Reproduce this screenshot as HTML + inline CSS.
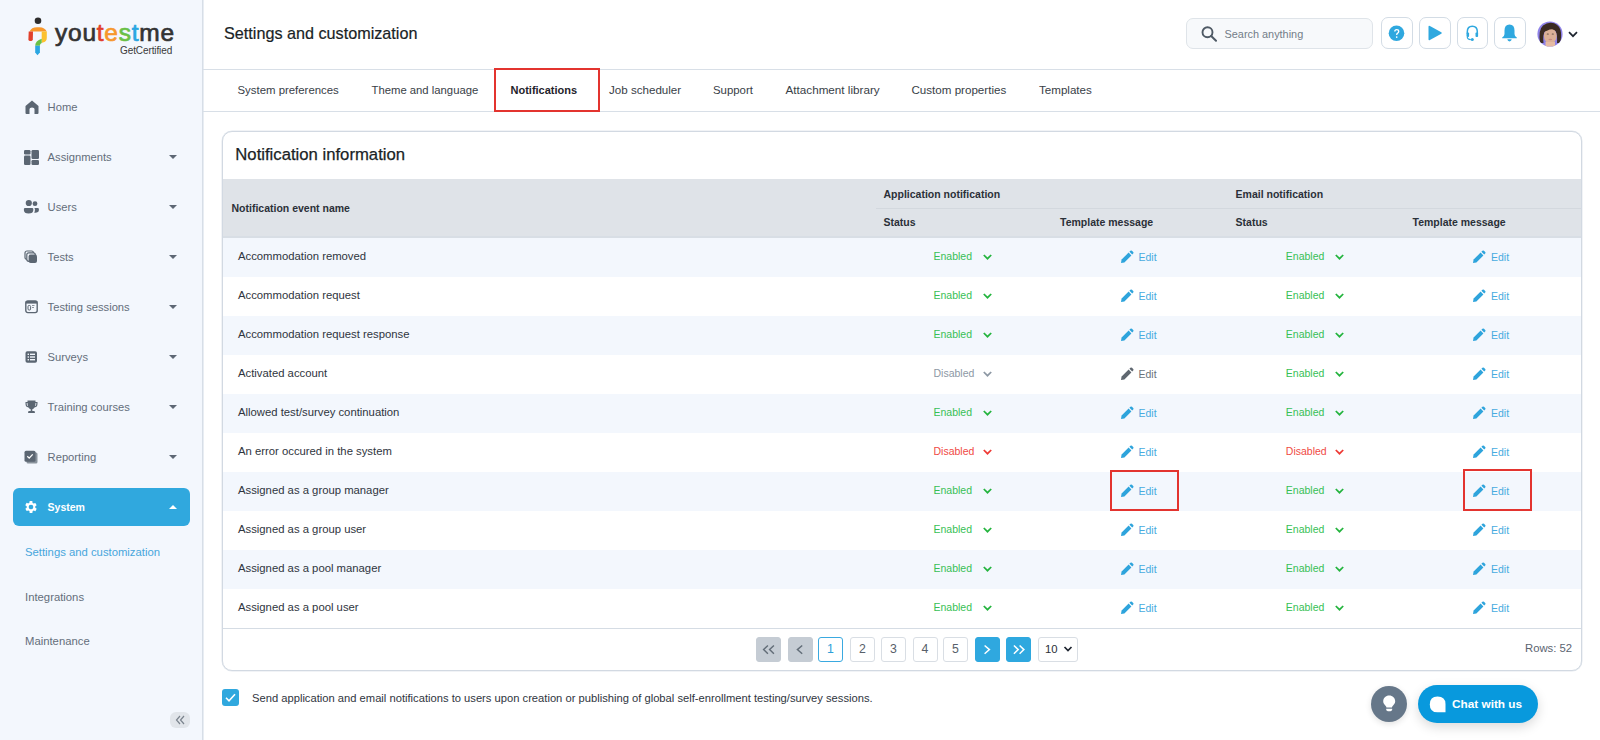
<!DOCTYPE html>
<html><head><meta charset="utf-8">
<style>
*{box-sizing:border-box;margin:0;padding:0}
html,body{width:1600px;height:740px;overflow:hidden;background:#fff;font-family:"Liberation Sans",sans-serif;color:#2b3038}
.abs{position:absolute;white-space:nowrap}
#side{position:absolute;left:0;top:0;width:203px;height:740px;background:#f3f7fd;border-right:1px solid #d7dee7;box-shadow:1px 0 0 #e8edf3}
.nav{position:absolute;left:47.6px;font-size:11.2px;line-height:14px;color:#636e7b}
.nico{position:absolute}
.caret{position:absolute;left:169px;width:0;height:0;border-left:4px solid transparent;border-right:4px solid transparent;border-top:4.5px solid #5d6774}
#hdr{position:absolute;left:203px;top:0;width:1397px;height:70px;border-bottom:1px solid #d8dfe7}
#tabs{position:absolute;left:203px;top:70px;width:1397px;height:42px;border-bottom:1px solid #d8dfe7}
.tab{position:absolute;top:83px;font-size:11.4px;line-height:14px;color:#383e47}
.redbox{position:absolute;border:2.5px solid #e3342f}
#card{position:absolute;left:222px;top:131px;width:1360px;height:540px;border:1px solid #d2d9e2;box-shadow:0 0 0 0.5px #e3e8ee;border-radius:10px;overflow:hidden;background:#fff}
.th{position:absolute;font-size:10.5px;font-weight:bold;line-height:14px;color:#2b3038}
.row{position:absolute;left:0;width:1358px;height:39px}
.row.odd{background:#f3f7fd}
.cell{position:absolute;top:0;height:39px;line-height:36px;font-size:11.3px;color:#2f3540}
.st{position:absolute;top:0;height:39px;line-height:36px;font-size:10.5px}
.ed{position:absolute;top:0;height:39px;line-height:38px;font-size:10.5px;color:#47abe0}
.pg{position:absolute;top:637px;width:25px;height:25px;border:1px solid #d9dee4;border-radius:3px;background:#fff;font-size:12.3px;line-height:23.3px;text-align:center;color:#58606a}
.ibtn{position:absolute;top:17px;width:31.5px;height:32px;border:1px solid #d3dce5;border-radius:7px;background:#fff}
</style></head><body>

<div id="side">
  <!-- logo -->
  <svg class="abs" style="left:24px;top:12px" width="28" height="46" viewBox="0 0 28 46">
    <circle cx="14" cy="8.7" r="3.3" fill="#2d2d2d"/>
    <path d="M5.6 19.6 C6.6 16.6 9.4 15.2 13 15.2 L15.5 15.2 C19 15.2 21.6 16.8 22.7 19.6 Z" fill="#f7972b"/>
    <path d="M4.7 19.4 L9 19.4 L8.8 27.6 Q8.7 28.9 7.3 28.9 L5.8 28.9 Q4.4 28.9 4.4 27.6 Z" fill="#e1402b"/>
    <path d="M17.7 19.4 L22.8 19.4 L22.8 26 Q22.8 29.6 18.8 30.6 L17.7 30.9 Z" fill="#fcc12f"/>
    <path d="M17.7 26.7 L17.7 30.9 Q15.9 31.6 15.9 33.8 L11.2 33.8 Q11.2 28.6 17.7 26.7 Z" fill="#69c045"/>
    <path d="M11.2 33.7 L15.9 33.7 L15.9 40.6 L13.5 43.2 L11.2 40.6 Z" fill="#2aa6e2"/>
  </svg>
  <div class="abs" style="left:55px;top:17.8px;font-size:24.5px;line-height:30px;letter-spacing:0.75px;-webkit-text-stroke:0.7px #333;color:#333">you<span style="color:#e1402b;-webkit-text-stroke-color:#e1402b">t</span><span style="color:#f7972b;-webkit-text-stroke-color:#f7972b">e</span><span style="color:#69c045;-webkit-text-stroke-color:#69c045">s</span><span style="color:#2aa6e2;-webkit-text-stroke-color:#2aa6e2">t</span>me</div>
  <div class="abs" style="left:120px;top:45px;font-size:10px;line-height:12px;color:#3a3a3a;letter-spacing:-0.1px">GetCertified</div>

  <!-- nav -->
  <svg class="nico" style="left:25px;top:100px" width="14" height="14" viewBox="0 0 14 14"><path d="M7 0.5 L13.5 6 L13.5 13 Q13.5 14 12.5 14 L9.5 14 L9.5 9 Q9.5 7.5 7 7.5 Q4.5 7.5 4.5 9 L4.5 14 L1.5 14 Q0.5 14 0.5 13 L0.5 6 Z" fill="#5b6672"/></svg>
  <div class="nav" style="top:100px">Home</div>

  <svg class="nico" style="left:24px;top:150px" width="15" height="15" viewBox="0 0 15 15"><rect x="0" y="0" width="6.5" height="4.5" rx="1.2" fill="#5b6672"/><rect x="0" y="5.5" width="6.5" height="9.5" rx="1.2" fill="#5b6672"/><rect x="7.5" y="0" width="7.5" height="9" rx="1.2" fill="#5b6672"/><rect x="7.5" y="10" width="7.5" height="5" rx="1.2" fill="#5b6672"/></svg>
  <div class="nav" style="top:150px">Assignments</div>
  <div class="caret" style="top:155px"></div>

  <svg class="nico" style="left:23px;top:199px" width="17" height="16" viewBox="0 0 17 16"><circle cx="5.8" cy="4" r="3.1" fill="#5b6672"/><circle cx="12" cy="4.7" r="2.4" fill="#5b6672"/><path d="M0.9 10 Q0.9 9 2 9 L9.2 9 Q10.3 9 10.3 10 L10.3 11 Q10.3 14.6 5.6 14.6 Q0.9 14.6 0.9 11 Z" fill="#5b6672"/><path d="M11.2 9 L14.8 9 Q15.9 9 15.9 10 L15.9 11 Q15.9 13.8 12.2 13.8 L11.2 13.8 Q11.9 12.6 11.9 11 L11.9 10 Q11.9 9.4 11.2 9 Z" fill="#5b6672"/></svg>
  <div class="nav" style="top:200px">Users</div>
  <div class="caret" style="top:205px"></div>

  <svg class="nico" style="left:24px;top:250px" width="14" height="14" viewBox="0 0 14 14"><rect x="1" y="1" width="8.5" height="8.5" rx="2" fill="none" stroke="#5b6672" stroke-width="1.2"/><rect x="2.8" y="2.8" width="8.5" height="8.5" rx="2" fill="#f3f7fd" stroke="#5b6672" stroke-width="1.2"/><rect x="4.6" y="4.6" width="8.4" height="8.4" rx="2" fill="#5b6672"/></svg>
  <div class="nav" style="top:250px">Tests</div>
  <div class="caret" style="top:255px"></div>

  <svg class="nico" style="left:25px;top:300px" width="13" height="14" viewBox="0 0 13 14"><rect x="0.8" y="1" width="11.4" height="11.6" rx="2" fill="none" stroke="#5b6672" stroke-width="1.4"/><rect x="0.8" y="1" width="11.4" height="2.6" fill="#5b6672"/><rect x="3" y="5.5" width="2.6" height="4.5" rx="1" fill="none" stroke="#5b6672" stroke-width="1"/><rect x="7" y="5" width="2.5" height="1" fill="#8a939c"/><rect x="7" y="7" width="2" height="1" fill="#8a939c"/></svg>
  <div class="nav" style="top:300px">Testing sessions</div>
  <div class="caret" style="top:305px"></div>

  <svg class="nico" style="left:25px;top:351px" width="13" height="12" viewBox="0 0 13 12"><rect x="0.5" y="0.3" width="11.5" height="11.5" rx="1.8" fill="#5b6672"/><rect x="2.6" y="2.6" width="1.4" height="1.4" fill="#f3f7fd"/><rect x="2.6" y="5.3" width="1.4" height="1.4" fill="#f3f7fd"/><rect x="2.6" y="8" width="1.4" height="1.4" fill="#f3f7fd"/><rect x="5" y="2.6" width="5" height="1.4" fill="#f3f7fd"/><rect x="5" y="5.3" width="5" height="1.4" fill="#f3f7fd"/><rect x="5" y="8" width="5" height="1.4" fill="#f3f7fd"/></svg>
  <div class="nav" style="top:350px">Surveys</div>
  <div class="caret" style="top:355px"></div>

  <svg class="nico" style="left:25px;top:400px" width="13" height="14" viewBox="0 0 13 14"><path d="M2.5 0.5 L10.5 0.5 L10.5 2 L12.5 2 L12.5 4 Q12.5 7 9.5 7.5 Q8.5 9 7.3 9.3 L7.3 11 L9.5 11 L10 13 L3 13 L3.5 11 L5.7 11 L5.7 9.3 Q4.5 9 3.5 7.5 Q0.5 7 0.5 4 L0.5 2 L2.5 2 Z M1.7 3 L1.7 4 Q1.7 6 3 6.3 Q2.5 5 2.5 3 Z M11.3 3 L10.5 3 Q10.5 5 10 6.3 Q11.3 6 11.3 4 Z" fill="#5b6672"/></svg>
  <div class="nav" style="top:400px">Training courses</div>
  <div class="caret" style="top:405px"></div>

  <svg class="nico" style="left:24px;top:450px" width="14" height="14" viewBox="0 0 14 14"><rect x="2.5" y="2.5" width="11" height="11" rx="1.5" fill="#8a939c"/><rect x="0.5" y="0.8" width="11" height="11" rx="1.5" fill="#5b6672"/><path d="M3.3 6.3 L5.2 8.1 L8.7 4.4" stroke="#fff" stroke-width="1.3" fill="none"/></svg>
  <div class="nav" style="top:450px">Reporting</div>
  <div class="caret" style="top:455px"></div>

  <div class="abs" style="left:12.5px;top:488px;width:177.5px;height:37.5px;background:#30a8de;border-radius:6px"></div>
  <svg class="nico" style="left:23.4px;top:499px" width="16" height="16" viewBox="0 0 24 24"><path fill="#fff" d="M19.4 13a7.5 7.5 0 0 0 0-2l2.1-1.6-2-3.5-2.5 1a7.4 7.4 0 0 0-1.7-1L15 3h-4l-.4 2.8a7.4 7.4 0 0 0-1.7 1l-2.5-1-2 3.5L6.6 11a7.5 7.5 0 0 0 0 2l-2.1 1.6 2 3.5 2.5-1a7.4 7.4 0 0 0 1.7 1L11 21h4l.4-2.8a7.4 7.4 0 0 0 1.7-1l2.5 1 2-3.5zM13 15.5a3.5 3.5 0 1 1 0-7 3.5 3.5 0 0 1 0 7z" transform="translate(-1 0)"/></svg>
  <div class="nav" style="top:500px;color:#fff;font-weight:bold;font-size:10.5px">System</div>
  <div class="caret" style="top:504.5px;border-top:0;border-bottom:4.5px solid #fff"></div>

  <div class="nav" style="left:25px;top:545px;color:#47a6dc;font-size:11.3px">Settings and customization</div>
  <div class="nav" style="left:25px;top:590px;font-size:11.3px">Integrations</div>
  <div class="nav" style="left:25px;top:634px;font-size:11.3px">Maintenance</div>

  <div class="abs" style="left:170px;top:712px;width:20px;height:16px;border-radius:6px;background:#e1e5ea"></div>
  <svg class="abs" style="left:174px;top:714px" width="12" height="12" viewBox="0 0 12 12"><path d="M6 2 L2.5 6 L6 10 M10 2 L6.5 6 L10 10" stroke="#7a838d" stroke-width="1.2" fill="none"/></svg>
</div>

<div id="hdr"></div>
<div class="abs" style="left:224px;top:24px;font-size:16.2px;line-height:18px;color:#1a1f26;-webkit-text-stroke:0.2px #1a1f26">Settings and customization</div>

<!-- search -->
<div class="abs" style="left:1186px;top:17.5px;width:187px;height:31px;border:1px solid #dfe4e9;border-radius:7px;background:#f7f9fb"></div>
<svg class="abs" style="left:1201px;top:26px" width="17" height="16" viewBox="0 0 17 16"><circle cx="6.5" cy="6.3" r="5" stroke="#4f5a65" stroke-width="1.9" fill="none"/><path d="M10.2 10 L15 14.8" stroke="#4f5a65" stroke-width="2" stroke-linecap="round"/></svg>
<div class="abs" style="left:1224.5px;top:27px;font-size:10.9px;line-height:14px;color:#737d88">Search anything</div>

<div class="ibtn" style="left:1381px"></div>
<div class="ibtn" style="left:1419px"></div>
<div class="ibtn" style="left:1456.5px"></div>
<div class="ibtn" style="left:1494px"></div>
<svg class="abs" style="left:1388px;top:25px" width="17" height="17" viewBox="0 0 17 17"><circle cx="8.5" cy="8.3" r="7.8" fill="#2fa8df"/><path d="M6.8 6.5 Q6.8 4.6 8.7 4.6 Q10.7 4.6 10.7 6.4 Q10.7 7.5 9.6 8.1 Q8.7 8.6 8.7 9.9" stroke="#fff" stroke-width="1.35" fill="none"/><circle cx="8.7" cy="12.1" r="0.85" fill="#fff"/></svg>
<svg class="abs" style="left:1426px;top:25px" width="17" height="17" viewBox="0 0 17 17"><path d="M2.5 1.8 Q2.5 0.3 3.9 1 L15.3 7.3 Q16.3 8 15.3 8.7 L3.9 15 Q2.5 15.7 2.5 14.2 Z" fill="#2fa8df"/></svg>
<svg class="abs" style="left:1464px;top:25px" width="17" height="17" viewBox="0 0 17 17"><path d="M3.3 8.5 L3.3 6.8 Q3.3 1.3 8.3 1.3 Q13.3 1.3 13.3 6.8 L13.3 8.5" stroke="#2fa8df" stroke-width="1.5" fill="none"/><rect x="2.5" y="7.5" width="2.6" height="4.5" rx="0.9" fill="#2fa8df"/><rect x="11.5" y="7.5" width="2.6" height="4.5" rx="0.9" fill="#2fa8df"/><path d="M3.3 12 Q3.3 14.5 6.8 14.6" stroke="#2fa8df" stroke-width="1.2" fill="none"/><circle cx="8.3" cy="14.6" r="1.5" fill="#2fa8df"/></svg>
<svg class="abs" style="left:1501px;top:24px" width="17" height="19" viewBox="0 0 17 19"><path d="M8.5 0.5 Q13.5 0.5 13.5 6.5 L13.5 10 Q13.5 12 15.8 13.5 L15.8 14.2 L1.2 14.2 L1.2 13.5 Q3.5 12 3.5 10 L3.5 6.5 Q3.5 0.5 8.5 0.5 Z" fill="#2fa8df"/><path d="M6.3 15.3 Q6.6 17.4 8.5 17.4 Q10.4 17.4 10.7 15.3 Z" fill="#2fa8df"/></svg>

<!-- avatar -->
<svg class="abs" style="left:1537px;top:20.5px" width="26" height="26" viewBox="0 0 26 26">
  <defs><clipPath id="av"><circle cx="13" cy="13" r="12.6"/></clipPath></defs>
  <g clip-path="url(#av)">
    <rect width="26" height="26" fill="#8e82e8"/>
    <path d="M3 22 Q1 9 6 4.5 Q10 1.5 14 1.8 Q21 2 23.5 9 Q25 15 23 22 L20 22 Q20.5 14 18.5 10 L8 10 Q5.5 14 6.5 22 Z" fill="#3b2b22"/>
    <ellipse cx="13.3" cy="14.8" rx="6.4" ry="7.6" fill="#dcb097"/>
    <path d="M6.5 11 Q8 6 13 5.8 Q18.5 5.8 20 11 Q18 8.5 15 8.2 Q12.5 8.3 10.5 9.5 Q8.5 10.2 6.5 11 Z" fill="#3b2b22"/>
    <rect x="8.5" y="21" width="9.5" height="6" fill="#e6bba3"/>
    <ellipse cx="13.3" cy="18.4" rx="1.9" ry="0.75" fill="#c98a80"/>
    <ellipse cx="10.8" cy="13" rx="1.1" ry="0.55" fill="#5a4a45"/>
    <ellipse cx="15.8" cy="13" rx="1.1" ry="0.55" fill="#5a4a45"/>
  </g>
</svg>
<svg class="abs" style="left:1568px;top:31px" width="10" height="7" viewBox="0 0 10 7"><path d="M1 1.2 L5 5.2 L9 1.2" stroke="#1e2530" stroke-width="1.7" fill="none"/></svg>

<!-- tabs -->
<div id="tabs"></div>
<div class="tab" style="left:237.5px">System preferences</div>
<div class="tab" style="left:371.5px;font-size:11.3px">Theme and language</div>
<div class="tab" style="left:510.5px;font-weight:bold;font-size:11px;color:#1f242b">Notifications</div>
<div class="tab" style="left:609px;font-size:11.6px">Job scheduler</div>
<div class="tab" style="left:713px">Support</div>
<div class="tab" style="left:785.5px;font-size:11.7px">Attachment library</div>
<div class="tab" style="left:911.5px;font-size:11.6px">Custom properties</div>
<div class="tab" style="left:1039px;font-size:11.6px">Templates</div>
<div class="redbox" style="left:493.5px;top:68.3px;width:106px;height:43.6px"></div>


<!-- card -->
<div id="card">
  <div class="abs" style="left:12.3px;top:13px;font-size:16.7px;line-height:19px;color:#1a1f26;-webkit-text-stroke:0.25px #1a1f26">Notification information</div>
  <div class="abs" style="left:0;top:47px;width:1358px;height:59px;background:#dfe3e8;border-bottom:2px solid #d8dee5"></div>
  <div class="abs" style="left:653px;top:76px;width:705px;height:1px;background:#d3d8de"></div>
  <div class="th" style="left:8.5px;top:69px">Notification event name</div>
  <div class="th" style="left:660.5px;top:55px">Application notification</div>
  <div class="th" style="left:1012.6px;top:55px">Email notification</div>
  <div class="th" style="left:660.5px;top:83px">Status</div>
  <div class="th" style="left:837px;top:83px">Template message</div>
  <div class="th" style="left:1012.6px;top:83px">Status</div>
  <div class="th" style="left:1189.5px;top:83px">Template message</div>
  <!--ROWS--><div class="row odd" style="top:106px"><div class="cell" style="left:15px">Accommodation removed</div><div class="st" style="left:710.5px;color:#37bf55">Enabled</div><svg class="abs" style="left:758.9px;top:15.3px" width="11" height="8" viewBox="0 0 11 8"><path d="M1.8 2 L5.5 5.7 L9.2 2" stroke="#24b43e" stroke-width="1.75" fill="none"/></svg><div class="st" style="left:1062.8px;color:#37bf55">Enabled</div><svg class="abs" style="left:1111.2px;top:15.3px" width="11" height="8" viewBox="0 0 11 8"><path d="M1.8 2 L5.5 5.7 L9.2 2" stroke="#24b43e" stroke-width="1.75" fill="none"/></svg><svg class="abs" style="left:896.8px;top:12px" width="14" height="14" viewBox="0 0 14 14"><path d="M1 13 L1.6 9.6 L8.6 2.6 L11.4 5.4 L4.4 12.4 Z" fill="#2ea4dc"/><path d="M9.4 1.8 L10.4 0.8 Q11.2 0 12 0.8 L13.2 2 Q14 2.8 13.2 3.6 L12.2 4.6 Z" fill="#2ea4dc"/></svg><div class="ed" style="left:915.5px;color:#47abe0">Edit</div><svg class="abs" style="left:1249.3px;top:12px" width="14" height="14" viewBox="0 0 14 14"><path d="M1 13 L1.6 9.6 L8.6 2.6 L11.4 5.4 L4.4 12.4 Z" fill="#2ea4dc"/><path d="M9.4 1.8 L10.4 0.8 Q11.2 0 12 0.8 L13.2 2 Q14 2.8 13.2 3.6 L12.2 4.6 Z" fill="#2ea4dc"/></svg><div class="ed" style="left:1268.0px;color:#47abe0">Edit</div></div>
<div class="row" style="top:145px"><div class="cell" style="left:15px">Accommodation request</div><div class="st" style="left:710.5px;color:#37bf55">Enabled</div><svg class="abs" style="left:758.9px;top:15.3px" width="11" height="8" viewBox="0 0 11 8"><path d="M1.8 2 L5.5 5.7 L9.2 2" stroke="#24b43e" stroke-width="1.75" fill="none"/></svg><div class="st" style="left:1062.8px;color:#37bf55">Enabled</div><svg class="abs" style="left:1111.2px;top:15.3px" width="11" height="8" viewBox="0 0 11 8"><path d="M1.8 2 L5.5 5.7 L9.2 2" stroke="#24b43e" stroke-width="1.75" fill="none"/></svg><svg class="abs" style="left:896.8px;top:12px" width="14" height="14" viewBox="0 0 14 14"><path d="M1 13 L1.6 9.6 L8.6 2.6 L11.4 5.4 L4.4 12.4 Z" fill="#2ea4dc"/><path d="M9.4 1.8 L10.4 0.8 Q11.2 0 12 0.8 L13.2 2 Q14 2.8 13.2 3.6 L12.2 4.6 Z" fill="#2ea4dc"/></svg><div class="ed" style="left:915.5px;color:#47abe0">Edit</div><svg class="abs" style="left:1249.3px;top:12px" width="14" height="14" viewBox="0 0 14 14"><path d="M1 13 L1.6 9.6 L8.6 2.6 L11.4 5.4 L4.4 12.4 Z" fill="#2ea4dc"/><path d="M9.4 1.8 L10.4 0.8 Q11.2 0 12 0.8 L13.2 2 Q14 2.8 13.2 3.6 L12.2 4.6 Z" fill="#2ea4dc"/></svg><div class="ed" style="left:1268.0px;color:#47abe0">Edit</div></div>
<div class="row odd" style="top:184px"><div class="cell" style="left:15px">Accommodation request response</div><div class="st" style="left:710.5px;color:#37bf55">Enabled</div><svg class="abs" style="left:758.9px;top:15.3px" width="11" height="8" viewBox="0 0 11 8"><path d="M1.8 2 L5.5 5.7 L9.2 2" stroke="#24b43e" stroke-width="1.75" fill="none"/></svg><div class="st" style="left:1062.8px;color:#37bf55">Enabled</div><svg class="abs" style="left:1111.2px;top:15.3px" width="11" height="8" viewBox="0 0 11 8"><path d="M1.8 2 L5.5 5.7 L9.2 2" stroke="#24b43e" stroke-width="1.75" fill="none"/></svg><svg class="abs" style="left:896.8px;top:12px" width="14" height="14" viewBox="0 0 14 14"><path d="M1 13 L1.6 9.6 L8.6 2.6 L11.4 5.4 L4.4 12.4 Z" fill="#2ea4dc"/><path d="M9.4 1.8 L10.4 0.8 Q11.2 0 12 0.8 L13.2 2 Q14 2.8 13.2 3.6 L12.2 4.6 Z" fill="#2ea4dc"/></svg><div class="ed" style="left:915.5px;color:#47abe0">Edit</div><svg class="abs" style="left:1249.3px;top:12px" width="14" height="14" viewBox="0 0 14 14"><path d="M1 13 L1.6 9.6 L8.6 2.6 L11.4 5.4 L4.4 12.4 Z" fill="#2ea4dc"/><path d="M9.4 1.8 L10.4 0.8 Q11.2 0 12 0.8 L13.2 2 Q14 2.8 13.2 3.6 L12.2 4.6 Z" fill="#2ea4dc"/></svg><div class="ed" style="left:1268.0px;color:#47abe0">Edit</div></div>
<div class="row" style="top:223px"><div class="cell" style="left:15px">Activated account</div><div class="st" style="left:710.5px;color:#8d98a4">Disabled</div><svg class="abs" style="left:758.9px;top:15.3px" width="11" height="8" viewBox="0 0 11 8"><path d="M1.8 2 L5.5 5.7 L9.2 2" stroke="#8d98a4" stroke-width="1.75" fill="none"/></svg><div class="st" style="left:1062.8px;color:#37bf55">Enabled</div><svg class="abs" style="left:1111.2px;top:15.3px" width="11" height="8" viewBox="0 0 11 8"><path d="M1.8 2 L5.5 5.7 L9.2 2" stroke="#24b43e" stroke-width="1.75" fill="none"/></svg><svg class="abs" style="left:896.8px;top:12px" width="14" height="14" viewBox="0 0 14 14"><path d="M1 13 L1.6 9.6 L8.6 2.6 L11.4 5.4 L4.4 12.4 Z" fill="#5f6770"/><path d="M9.4 1.8 L10.4 0.8 Q11.2 0 12 0.8 L13.2 2 Q14 2.8 13.2 3.6 L12.2 4.6 Z" fill="#5f6770"/></svg><div class="ed" style="left:915.5px;color:#6a727b">Edit</div><svg class="abs" style="left:1249.3px;top:12px" width="14" height="14" viewBox="0 0 14 14"><path d="M1 13 L1.6 9.6 L8.6 2.6 L11.4 5.4 L4.4 12.4 Z" fill="#2ea4dc"/><path d="M9.4 1.8 L10.4 0.8 Q11.2 0 12 0.8 L13.2 2 Q14 2.8 13.2 3.6 L12.2 4.6 Z" fill="#2ea4dc"/></svg><div class="ed" style="left:1268.0px;color:#47abe0">Edit</div></div>
<div class="row odd" style="top:262px"><div class="cell" style="left:15px">Allowed test/survey continuation</div><div class="st" style="left:710.5px;color:#37bf55">Enabled</div><svg class="abs" style="left:758.9px;top:15.3px" width="11" height="8" viewBox="0 0 11 8"><path d="M1.8 2 L5.5 5.7 L9.2 2" stroke="#24b43e" stroke-width="1.75" fill="none"/></svg><div class="st" style="left:1062.8px;color:#37bf55">Enabled</div><svg class="abs" style="left:1111.2px;top:15.3px" width="11" height="8" viewBox="0 0 11 8"><path d="M1.8 2 L5.5 5.7 L9.2 2" stroke="#24b43e" stroke-width="1.75" fill="none"/></svg><svg class="abs" style="left:896.8px;top:12px" width="14" height="14" viewBox="0 0 14 14"><path d="M1 13 L1.6 9.6 L8.6 2.6 L11.4 5.4 L4.4 12.4 Z" fill="#2ea4dc"/><path d="M9.4 1.8 L10.4 0.8 Q11.2 0 12 0.8 L13.2 2 Q14 2.8 13.2 3.6 L12.2 4.6 Z" fill="#2ea4dc"/></svg><div class="ed" style="left:915.5px;color:#47abe0">Edit</div><svg class="abs" style="left:1249.3px;top:12px" width="14" height="14" viewBox="0 0 14 14"><path d="M1 13 L1.6 9.6 L8.6 2.6 L11.4 5.4 L4.4 12.4 Z" fill="#2ea4dc"/><path d="M9.4 1.8 L10.4 0.8 Q11.2 0 12 0.8 L13.2 2 Q14 2.8 13.2 3.6 L12.2 4.6 Z" fill="#2ea4dc"/></svg><div class="ed" style="left:1268.0px;color:#47abe0">Edit</div></div>
<div class="row" style="top:301px"><div class="cell" style="left:15px">An error occured in the system</div><div class="st" style="left:710.5px;color:#f04a45">Disabled</div><svg class="abs" style="left:758.9px;top:15.3px" width="11" height="8" viewBox="0 0 11 8"><path d="M1.8 2 L5.5 5.7 L9.2 2" stroke="#ee3a35" stroke-width="1.75" fill="none"/></svg><div class="st" style="left:1062.8px;color:#f04a45">Disabled</div><svg class="abs" style="left:1111.2px;top:15.3px" width="11" height="8" viewBox="0 0 11 8"><path d="M1.8 2 L5.5 5.7 L9.2 2" stroke="#ee3a35" stroke-width="1.75" fill="none"/></svg><svg class="abs" style="left:896.8px;top:12px" width="14" height="14" viewBox="0 0 14 14"><path d="M1 13 L1.6 9.6 L8.6 2.6 L11.4 5.4 L4.4 12.4 Z" fill="#2ea4dc"/><path d="M9.4 1.8 L10.4 0.8 Q11.2 0 12 0.8 L13.2 2 Q14 2.8 13.2 3.6 L12.2 4.6 Z" fill="#2ea4dc"/></svg><div class="ed" style="left:915.5px;color:#47abe0">Edit</div><svg class="abs" style="left:1249.3px;top:12px" width="14" height="14" viewBox="0 0 14 14"><path d="M1 13 L1.6 9.6 L8.6 2.6 L11.4 5.4 L4.4 12.4 Z" fill="#2ea4dc"/><path d="M9.4 1.8 L10.4 0.8 Q11.2 0 12 0.8 L13.2 2 Q14 2.8 13.2 3.6 L12.2 4.6 Z" fill="#2ea4dc"/></svg><div class="ed" style="left:1268.0px;color:#47abe0">Edit</div></div>
<div class="row odd" style="top:340px"><div class="cell" style="left:15px">Assigned as a group manager</div><div class="st" style="left:710.5px;color:#37bf55">Enabled</div><svg class="abs" style="left:758.9px;top:15.3px" width="11" height="8" viewBox="0 0 11 8"><path d="M1.8 2 L5.5 5.7 L9.2 2" stroke="#24b43e" stroke-width="1.75" fill="none"/></svg><div class="st" style="left:1062.8px;color:#37bf55">Enabled</div><svg class="abs" style="left:1111.2px;top:15.3px" width="11" height="8" viewBox="0 0 11 8"><path d="M1.8 2 L5.5 5.7 L9.2 2" stroke="#24b43e" stroke-width="1.75" fill="none"/></svg><svg class="abs" style="left:896.8px;top:12px" width="14" height="14" viewBox="0 0 14 14"><path d="M1 13 L1.6 9.6 L8.6 2.6 L11.4 5.4 L4.4 12.4 Z" fill="#2ea4dc"/><path d="M9.4 1.8 L10.4 0.8 Q11.2 0 12 0.8 L13.2 2 Q14 2.8 13.2 3.6 L12.2 4.6 Z" fill="#2ea4dc"/></svg><div class="ed" style="left:915.5px;color:#47abe0">Edit</div><svg class="abs" style="left:1249.3px;top:12px" width="14" height="14" viewBox="0 0 14 14"><path d="M1 13 L1.6 9.6 L8.6 2.6 L11.4 5.4 L4.4 12.4 Z" fill="#2ea4dc"/><path d="M9.4 1.8 L10.4 0.8 Q11.2 0 12 0.8 L13.2 2 Q14 2.8 13.2 3.6 L12.2 4.6 Z" fill="#2ea4dc"/></svg><div class="ed" style="left:1268.0px;color:#47abe0">Edit</div></div>
<div class="row" style="top:379px"><div class="cell" style="left:15px">Assigned as a group user</div><div class="st" style="left:710.5px;color:#37bf55">Enabled</div><svg class="abs" style="left:758.9px;top:15.3px" width="11" height="8" viewBox="0 0 11 8"><path d="M1.8 2 L5.5 5.7 L9.2 2" stroke="#24b43e" stroke-width="1.75" fill="none"/></svg><div class="st" style="left:1062.8px;color:#37bf55">Enabled</div><svg class="abs" style="left:1111.2px;top:15.3px" width="11" height="8" viewBox="0 0 11 8"><path d="M1.8 2 L5.5 5.7 L9.2 2" stroke="#24b43e" stroke-width="1.75" fill="none"/></svg><svg class="abs" style="left:896.8px;top:12px" width="14" height="14" viewBox="0 0 14 14"><path d="M1 13 L1.6 9.6 L8.6 2.6 L11.4 5.4 L4.4 12.4 Z" fill="#2ea4dc"/><path d="M9.4 1.8 L10.4 0.8 Q11.2 0 12 0.8 L13.2 2 Q14 2.8 13.2 3.6 L12.2 4.6 Z" fill="#2ea4dc"/></svg><div class="ed" style="left:915.5px;color:#47abe0">Edit</div><svg class="abs" style="left:1249.3px;top:12px" width="14" height="14" viewBox="0 0 14 14"><path d="M1 13 L1.6 9.6 L8.6 2.6 L11.4 5.4 L4.4 12.4 Z" fill="#2ea4dc"/><path d="M9.4 1.8 L10.4 0.8 Q11.2 0 12 0.8 L13.2 2 Q14 2.8 13.2 3.6 L12.2 4.6 Z" fill="#2ea4dc"/></svg><div class="ed" style="left:1268.0px;color:#47abe0">Edit</div></div>
<div class="row odd" style="top:418px"><div class="cell" style="left:15px">Assigned as a pool manager</div><div class="st" style="left:710.5px;color:#37bf55">Enabled</div><svg class="abs" style="left:758.9px;top:15.3px" width="11" height="8" viewBox="0 0 11 8"><path d="M1.8 2 L5.5 5.7 L9.2 2" stroke="#24b43e" stroke-width="1.75" fill="none"/></svg><div class="st" style="left:1062.8px;color:#37bf55">Enabled</div><svg class="abs" style="left:1111.2px;top:15.3px" width="11" height="8" viewBox="0 0 11 8"><path d="M1.8 2 L5.5 5.7 L9.2 2" stroke="#24b43e" stroke-width="1.75" fill="none"/></svg><svg class="abs" style="left:896.8px;top:12px" width="14" height="14" viewBox="0 0 14 14"><path d="M1 13 L1.6 9.6 L8.6 2.6 L11.4 5.4 L4.4 12.4 Z" fill="#2ea4dc"/><path d="M9.4 1.8 L10.4 0.8 Q11.2 0 12 0.8 L13.2 2 Q14 2.8 13.2 3.6 L12.2 4.6 Z" fill="#2ea4dc"/></svg><div class="ed" style="left:915.5px;color:#47abe0">Edit</div><svg class="abs" style="left:1249.3px;top:12px" width="14" height="14" viewBox="0 0 14 14"><path d="M1 13 L1.6 9.6 L8.6 2.6 L11.4 5.4 L4.4 12.4 Z" fill="#2ea4dc"/><path d="M9.4 1.8 L10.4 0.8 Q11.2 0 12 0.8 L13.2 2 Q14 2.8 13.2 3.6 L12.2 4.6 Z" fill="#2ea4dc"/></svg><div class="ed" style="left:1268.0px;color:#47abe0">Edit</div></div>
<div class="row" style="top:457px"><div class="cell" style="left:15px">Assigned as a pool user</div><div class="st" style="left:710.5px;color:#37bf55">Enabled</div><svg class="abs" style="left:758.9px;top:15.3px" width="11" height="8" viewBox="0 0 11 8"><path d="M1.8 2 L5.5 5.7 L9.2 2" stroke="#24b43e" stroke-width="1.75" fill="none"/></svg><div class="st" style="left:1062.8px;color:#37bf55">Enabled</div><svg class="abs" style="left:1111.2px;top:15.3px" width="11" height="8" viewBox="0 0 11 8"><path d="M1.8 2 L5.5 5.7 L9.2 2" stroke="#24b43e" stroke-width="1.75" fill="none"/></svg><svg class="abs" style="left:896.8px;top:12px" width="14" height="14" viewBox="0 0 14 14"><path d="M1 13 L1.6 9.6 L8.6 2.6 L11.4 5.4 L4.4 12.4 Z" fill="#2ea4dc"/><path d="M9.4 1.8 L10.4 0.8 Q11.2 0 12 0.8 L13.2 2 Q14 2.8 13.2 3.6 L12.2 4.6 Z" fill="#2ea4dc"/></svg><div class="ed" style="left:915.5px;color:#47abe0">Edit</div><svg class="abs" style="left:1249.3px;top:12px" width="14" height="14" viewBox="0 0 14 14"><path d="M1 13 L1.6 9.6 L8.6 2.6 L11.4 5.4 L4.4 12.4 Z" fill="#2ea4dc"/><path d="M9.4 1.8 L10.4 0.8 Q11.2 0 12 0.8 L13.2 2 Q14 2.8 13.2 3.6 L12.2 4.6 Z" fill="#2ea4dc"/></svg><div class="ed" style="left:1268.0px;color:#47abe0">Edit</div></div><!--/ROWS-->
  
  <div class="abs" style="left:0;top:496px;width:1358px;height:1px;background:#d5dce4"></div>
</div>

<!-- pagination -->
<div class="pg" style="left:756px;background:#c5ccd4;border-color:#c5ccd4"></div>
<div class="pg" style="left:788px;background:#c5ccd4;border-color:#c5ccd4"></div>
<div class="pg" style="left:818px;border-color:#3aa9e0;color:#2e9fd8">1</div>
<div class="pg" style="left:850px">2</div>
<div class="pg" style="left:881px">3</div>
<div class="pg" style="left:912.5px">4</div>
<div class="pg" style="left:943px">5</div>
<div class="pg" style="left:975px;background:#2fa8df;border-color:#2fa8df"></div>
<div class="pg" style="left:1006px;background:#2fa8df;border-color:#2fa8df"></div>
<div class="pg" style="left:1037.5px;width:40.5px;text-align:left;padding-left:6.5px;font-size:11.3px;color:#2b3038">10</div>
<svg class="abs" style="left:760px;top:642px" width="16" height="16" viewBox="0 0 16 16"><path d="M7.9 3.5 L3.6 7.6 L7.9 11.7 M13.9 3.5 L9.6 7.6 L13.9 11.7" stroke="#626d78" stroke-width="1.45" fill="none"/></svg>
<svg class="abs" style="left:792px;top:642px" width="16" height="16" viewBox="0 0 16 16"><path d="M10.2 3.5 L5.4 7.6 L10.2 11.7" stroke="#626d78" stroke-width="1.45" fill="none"/></svg>
<svg class="abs" style="left:979px;top:642px" width="16" height="16" viewBox="0 0 16 16"><path d="M5.6 3.5 L10.4 7.6 L5.6 11.7" stroke="#fff" stroke-width="1.5" fill="none"/></svg>
<svg class="abs" style="left:1010px;top:642px" width="16" height="16" viewBox="0 0 16 16"><path d="M3.9 3.5 L8.2 7.6 L3.9 11.7 M9.6 3.5 L13.9 7.6 L9.6 11.7" stroke="#fff" stroke-width="1.5" fill="none"/></svg>
<svg class="abs" style="left:1063px;top:645px" width="10" height="8" viewBox="0 0 10 8"><path d="M1.5 2 L5 5.5 L8.5 2" stroke="#1e2530" stroke-width="1.7" fill="none"/></svg>
<div class="abs" style="left:1525px;top:641px;font-size:11.3px;line-height:14px;color:#5b6470">Rows: 52</div>

<!-- checkbox -->
<div class="abs" style="left:222px;top:689px;width:17px;height:17px;border-radius:3px;background:#30a8de"></div>
<svg class="abs" style="left:222px;top:689px" width="17" height="17" viewBox="0 0 17 17"><path d="M4 8.8 L7 11.8 L13 5.3" stroke="#fff" stroke-width="1.6" fill="none"/></svg>
<div class="abs" style="left:252px;top:691px;font-size:11.2px;line-height:14px;color:#2f3540">Send application and email notifications to users upon creation or publishing of global self-enrollment testing/survey sessions.</div>

<!-- floating -->
<div class="abs" style="left:1370.5px;top:685.5px;width:36px;height:36px;border-radius:50%;background:#667789;box-shadow:0 2px 6px rgba(0,0,0,.12)"></div>
<svg class="abs" style="left:1381px;top:694px" width="16" height="18" viewBox="0 0 16 18"><path d="M8.2 1.4 C11.6 1.4 14.2 4 14.2 7.3 C14.2 9.4 13 10.6 11.9 11.8 C11.2 12.6 11 13 11 13.4 L5.4 13.4 C5.4 13 5.2 12.6 4.5 11.8 C3.4 10.6 2.2 9.4 2.2 7.3 C2.2 4 4.8 1.4 8.2 1.4 Z" fill="#fff"/><path d="M5.2 14.8 L11.2 14.8 L11.2 15.4 Q11.2 17.2 8.2 17.2 Q5.2 17.2 5.2 15.4 Z" fill="#fff"/></svg>
<div class="abs" style="left:1417.5px;top:685px;width:120px;height:37.5px;border-radius:19px;background:#0899dd;box-shadow:0 4px 12px rgba(0,0,0,.15)"></div>
<svg class="abs" style="left:1429.2px;top:695.5px" width="18" height="17" viewBox="0 0 18 17"><path d="M8.5 0.5 Q16.5 0.5 16.5 8 L16.5 16.3 L8.5 16.3 Q0.8 16.3 0.8 8.4 Q0.8 0.5 8.5 0.5 Z" fill="#fff"/></svg>
<div class="abs" style="left:1452px;top:697px;font-size:11.8px;line-height:14px;font-weight:bold;color:#fff">Chat with us</div>

<div class="redbox" style="left:1110.3px;top:470.1px;width:68.5px;height:40.8px"></div>
<div class="redbox" style="left:1462.6px;top:469.2px;width:69px;height:42.3px"></div>
</body></html>
